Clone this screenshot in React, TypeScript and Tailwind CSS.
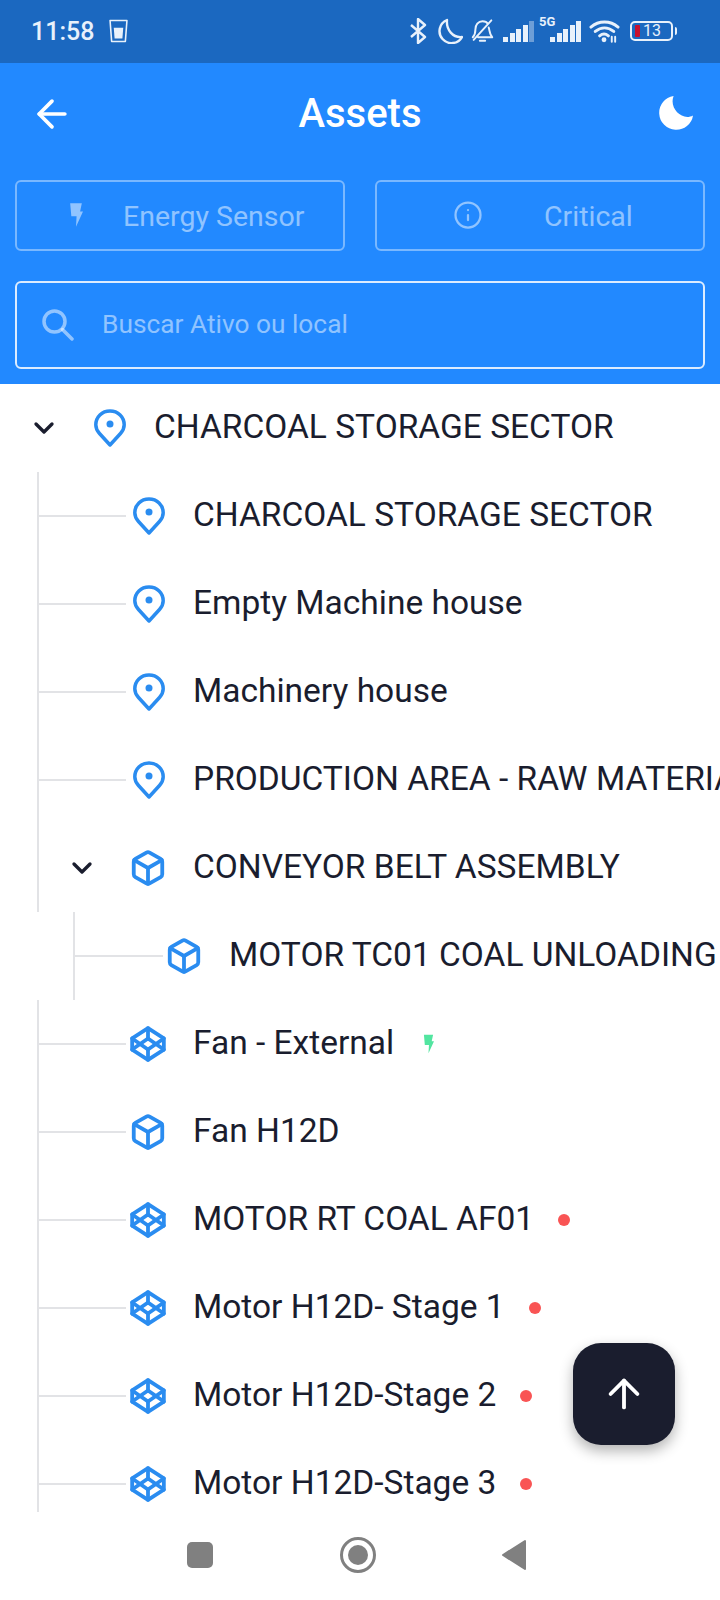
import { ArrowLeft, ArrowUp, Box, ChevronDown, Codepen, Info } from 'lucide-react';
import type { ReactNode } from 'react';

type IconKind = 'pin' | 'box' | 'component';
type Status = 'energy' | 'alert';

interface Node {
    label: string;
    icon: IconKind;
    status?: Status;
    nested?: boolean;
    expandable?: boolean;
    root?: boolean;
}

const NODES: Node[] = [
    { label: 'CHARCOAL STORAGE SECTOR', icon: 'pin', expandable: true, root: true },
    { label: 'CHARCOAL STORAGE SECTOR', icon: 'pin' },
    { label: 'Empty Machine house', icon: 'pin' },
    { label: 'Machinery house', icon: 'pin' },
    { label: 'PRODUCTION AREA - RAW MATERIAL', icon: 'pin' },
    { label: 'CONVEYOR BELT ASSEMBLY', icon: 'box', expandable: true },
    { label: 'MOTOR TC01 COAL UNLOADING', icon: 'box', nested: true },
    { label: 'Fan - External', icon: 'component', status: 'energy' },
    { label: 'Fan H12D', icon: 'box' },
    { label: 'MOTOR RT COAL AF01', icon: 'component', status: 'alert' },
    { label: 'Motor H12D- Stage 1', icon: 'component', status: 'alert' },
    { label: 'Motor H12D-Stage 2', icon: 'component', status: 'alert' },
    { label: 'Motor H12D-Stage 3', icon: 'component', status: 'alert' },
];

function Bolt({ className }: { className: string }) {
    return (
        <svg viewBox="0 0 12 20" className={className} fill="currentColor">
            <path d="M1 0h10l-1.500 7H12L6 20l.5-9H2z" />
        </svg>
    );
}

function PinIcon() {
    return (
        <svg viewBox="0 0 32 38" className="h-[38px] w-[32px]" fill="none" stroke="#2a8cf0" strokeWidth="3.500">
            <path d="M16 36 5.500 24.500C3 21.800 1.800 19 1.800 15.800 1.800 8 8 2 16 2s14.200 6 14.200 13.800c0 3.200-1.200 6-3.700 8.700z" strokeLinejoin="round" />
            <circle cx="16" cy="15" r="3.500" fill="#2a8cf0" stroke="none" />
        </svg>
    );
}

function TreeIcon({ kind }: { kind: IconKind }) {
    if (kind === 'pin') return <PinIcon />;
    if (kind === 'box') return <Box size={38} color="#2a8cf0" strokeWidth={2.4} className="-translate-x-[1px]" />;
    return <Codepen size={38} color="#2a8cf0" strokeWidth={2.4} className="-translate-x-[1px]" />;
}

function Chevron() {
    return <ChevronDown size={32} color="#1a1d2e" strokeWidth={2.5} />;
}

function TreeRow({ node }: { node: Node }) {
    let lead: ReactNode;
    if (node.root) {
        lead = (
            <div className="flex w-[91px] shrink-0 pl-[28px]">
                <Chevron />
            </div>
        );
    } else if (node.nested) {
        lead = (
            <div className="flex h-full w-[166px] shrink-0 items-center pl-[73px]">
                <div className="h-full w-[2px] bg-[#e2e3e6]" />
                <div className="h-[2px] w-[88px] bg-[#e2e3e6]" />
            </div>
        );
    } else if (node.expandable) {
        lead = (
            <div className="flex h-full w-[130px] shrink-0 items-center pl-[37px]">
                <div className="h-full w-[2px] bg-[#e2e3e6]" />
                <div className="ml-[27px]">
                    <Chevron />
                </div>
            </div>
        );
    } else {
        lead = (
            <div className="flex h-full w-[130px] shrink-0 items-center pl-[37px]">
                <div className="h-full w-[2px] bg-[#e2e3e6]" />
                <div className="h-[2px] w-[87px] bg-[#e2e3e6]" />
            </div>
        );
    }

    return (
        <div className="flex h-[88px] items-center">
            {lead}
            <div className="flex w-[38px] shrink-0 justify-center">
                <TreeIcon kind={node.icon} />
            </div>
            <span className="-mt-[1px] ml-[25px] whitespace-nowrap text-[33.5px] text-[#1a1d2e]">{node.label}</span>
            {node.status === 'energy' && <Bolt className="ml-[29px] h-[20px] w-[11px] text-[#52e5a0]" />}
            {node.status === 'alert' && <span className="ml-[24px] h-[12px] w-[12px] rounded-full bg-[#f95454]" />}
        </div>
    );
}

function SignalBars({ dim }: { dim?: boolean }) {
    return (
        <div className="flex h-[21px] items-end gap-[1.5px]">
            <span className="h-[5px] w-[5px] bg-[#e8f1fb]" />
            <span className="h-[9px] w-[5px] bg-[#e8f1fb]" />
            <span className="h-[13px] w-[5px] bg-[#e8f1fb]" />
            <span className="h-[17px] w-[5px] bg-[#e8f1fb]" />
            <span className={dim ? 'h-[21px] w-[5px] bg-[#e8f1fb]/40' : 'h-[21px] w-[5px] bg-[#e8f1fb]'} />
        </div>
    );
}

function StatusBar() {
    return (
        <div className="flex h-[63px] items-center bg-[#1b68c0] pl-[31px] pr-[43px]">
            <span className="text-[25px] font-medium text-[#e8f1fb]">11:58</span>
            <svg viewBox="0 0 18 22" className="ml-[15px] h-[24px] w-[19px]" fill="none" stroke="#e8f1fb" strokeWidth="1.500">
                <path d="M1 1h16l-1.500 20h-13z" strokeLinejoin="round" />
                <path d="M4.500 8h9l-.8 10H5.300z" fill="#e8f1fb" stroke="none" />
            </svg>
            <div className="ml-auto flex items-center text-[#e8f1fb]">
                <svg viewBox="0 0 18 26" className="h-[26px] w-[18px]" fill="none" stroke="currentColor" strokeWidth="2.400">
                    <path d="M2 7l14 12-7 6V1l7 6L2 19" strokeLinejoin="round" />
                </svg>
                <svg viewBox="0 0 27 26" className="ml-[9px] h-[26px] w-[27px]" fill="none" stroke="currentColor" strokeWidth="2.400">
                    <path d="M11 2a12 12 0 1 0 15 17C17 20 10 12 11 2z" strokeLinejoin="round" />
                </svg>
                <svg viewBox="0 0 26 28" className="ml-[8px] h-[26px] w-[23px]" fill="none" stroke="currentColor" strokeWidth="2.200">
                    <path d="M2 21c3-3 3-6 3-9 0-5 3-9 8-9 3 0 5 1 6 3M20 10c1 3 1 8 4 11H8M10 25h6M3 24 23 2" strokeLinejoin="round" strokeLinecap="round" />
                </svg>
                <div className="ml-[9px]">
                    <SignalBars dim />
                </div>
                <div className="relative ml-[5px] flex w-[42px] justify-end">
                    <span className="absolute left-0 top-[-6px] text-[13px] font-bold leading-none text-[#e8f1fb]">5G</span>
                    <SignalBars />
                </div>
                <svg viewBox="0 0 32 24" className="ml-[8px] h-[24px] w-[31px]" fill="none" stroke="currentColor" strokeWidth="3" strokeLinecap="round">
                    <path d="M2 8c8-7 20-7 28 0M6.500 12.500c6-5 13-5 19 0M11 17c3-2.500 6-2.500 9 0" />
                    <circle cx="15.500" cy="21" r="2.500" fill="currentColor" stroke="none" />
                    <path d="M23.500 18v5M27 18v5" strokeWidth="2" />
                </svg>
                <div className="ml-[10px] flex items-center">
                    <div className="flex h-[20px] w-[43px] items-center rounded-[5px] border-2 border-[#e8f1fb] pl-[3px]">
                        <span className="h-[12px] w-[5px] rounded-[1px] bg-[#c8102e]" />
                        <span className="ml-[3px] text-[16px] leading-none text-[#e8f1fb]">13</span>
                    </div>
                    <span className="ml-[2px] h-[8px] w-[2px] rounded-r bg-[#e8f1fb]" />
                </div>
            </div>
        </div>
    );
}

function Header() {
    return (
        <div className="bg-[#2289ff] px-[15px] pb-[15px]">
            <div className="relative flex h-[99px] items-center justify-between pl-[15px] pr-[11px]">
                <ArrowLeft size={44} color="#fff" strokeWidth={2} className="mt-[3px]" />
                <span className="absolute inset-x-0 top-[23px] text-center text-[40px] leading-[56px] font-medium text-white">Assets</span>
                <svg viewBox="0 0 36 36" className="h-[35px] w-[35px]" fill="#fff">
                    <path d="M15 1A17.500 17.500 0 1 0 35 21C24 27 10 14 15 1z" />
                </svg>
            </div>
            <div className="mt-[18px] grid grid-cols-2 gap-[30px]">
                <div className="flex h-[71px] items-center rounded-[6px] border-2 border-white/40 pl-[52px] text-white/50">
                    <Bolt className="h-[24px] w-[14px]" />
                    <span className="mt-[3px] ml-[40px] text-[28.5px]">Energy Sensor</span>
                </div>
                <div className="flex h-[71px] items-center rounded-[6px] border-2 border-white/40 pl-[76px] text-white/50">
                    <Info size={30} strokeWidth={1.8} />
                    <span className="mt-[3px] ml-[61px] text-[28.5px]">Critical</span>
                </div>
            </div>
            <div className="mt-[30px] flex h-[88px] items-center rounded-[6px] border-2 border-[#dcecff] pl-[25px] text-white/50">
                <svg viewBox="0 0 32 32" className="h-[32px] w-[32px]" fill="none" stroke="currentColor" strokeWidth="3.500" strokeLinecap="round">
                    <circle cx="12.500" cy="12.500" r="10.500" />
                    <path d="M20.500 20.500 30 30" />
                </svg>
                <span className="ml-[28px] text-[26.3px]">Buscar Ativo ou local</span>
            </div>
        </div>
    );
}

function NavBar() {
    return (
        <div className="flex h-[88px] items-center justify-center bg-white pb-[2px] pr-[8px]">
            <span className="ml-[2px] h-[26px] w-[26px] rounded-[5px] bg-[#808080]" />
            <span className="ml-[127px] flex h-[36px] w-[36px] items-center justify-center rounded-full border-[3px] border-[#808080]">
                <span className="h-[20px] w-[20px] rounded-full bg-[#808080]" />
            </span>
            <svg viewBox="0 0 26 32" className="ml-[125px] h-[32px] w-[26px]" fill="#808080" stroke="#808080" strokeWidth="2" strokeLinejoin="round">
                <path d="M24 2v28L2 16z" />
            </svg>
        </div>
    );
}

export default function App() {
    return (
        <div className="relative flex h-[1600px] w-[720px] flex-col overflow-hidden bg-white font-['Roboto',sans-serif]">
            <StatusBar />
            <Header />
            <div className="h-[1129px] overflow-hidden">
                {NODES.map((node, index) => (
                    <TreeRow key={index} node={node} />
                ))}
            </div>
            <NavBar />
            <button className="absolute left-[573px] top-[1343px] flex h-[102px] w-[102px] items-center justify-center rounded-[28px] bg-[#1a1d2e] shadow-[0_6px_14px_rgba(0,0,0,0.3)]">
                <ArrowUp size={46} color="#fff" strokeWidth={2} />
            </button>
        </div>
    );
}
